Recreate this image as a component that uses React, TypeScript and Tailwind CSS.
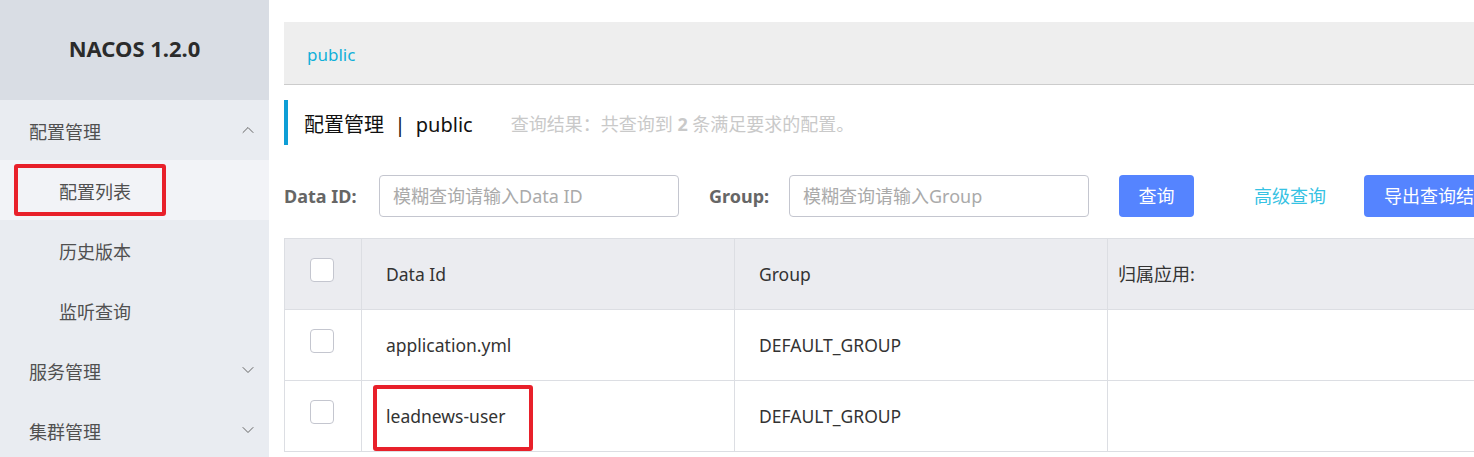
import { ChevronDown, ChevronUp } from "lucide-react";

const font = "font-['Noto_Sans','Noto_Sans_CJK_SC',sans-serif]";

const SideItem = ({ label, sub, open, active }: { label: string; sub?: boolean; open?: boolean; active?: boolean }) => (
  <div
    className={`relative flex h-[60px] items-center pt-1 text-[18px] text-[#505050] ${sub ? "pl-[59px]" : "pl-[29px]"} ${
      active ? "bg-[#f2f3f7]" : ""
    }`}
  >
    {label}
    {open !== undefined && (
      <span className="absolute right-[11px] top-[20px] text-[#666]">
        {open ? <ChevronUp size={20} strokeWidth={1.2} /> : <ChevronDown size={20} strokeWidth={1.2} />}
      </span>
    )}
  </div>
);

const Checkbox = () => <div className="h-6 w-6 rounded-[4px] border border-[#c4c6cf] bg-white" />;

const rows = ["application.yml", "leadnews-user"];

const App = () => {
  return (
    <div className={`relative flex h-[457px] w-[1474px] overflow-hidden bg-white ${font}`}>
      <aside className="w-[269px] shrink-0 bg-[#e9ecf1]">
        <div className="flex h-[100px] items-center justify-center bg-[#d9dde4] pb-1 text-[22px] font-bold text-[#2b2b2b]">
          NACOS 1.2.0
        </div>
        <SideItem label="配置管理" open />
        <SideItem label="配置列表" sub active />
        <SideItem label="历史版本" sub />
        <SideItem label="监听查询" sub />
        <SideItem label="服务管理" open={false} />
        <SideItem label="集群管理" open={false} />
      </aside>

      <main className="w-[1400px] shrink-0 pl-[15px] pt-[22px]">
        <div className="flex h-[63px] items-center border-b border-[#cccccc] bg-[#eeeeee] pl-[23px] pt-1 text-[17px] text-[#11b0d9]">
          public
        </div>

        <div className="mt-[15px] flex h-[45px] items-center border-l-4 border-[#0e9ed6] pl-4 pt-1">
          <span className="text-[20px] text-[#111]">配置管理&nbsp;&nbsp;|&nbsp;&nbsp;public</span>
          <span className="ml-[38px] text-[18px] text-[#c9c9c9]">
            查询结果：共查询到 <b className="font-bold">2</b> 条满足要求的配置。
          </span>
        </div>

        <div className="mt-[30px] flex h-[42px] items-center text-[18px]">
          <span className="w-[95px] font-bold text-[#666]">Data ID:</span>
          <div className="flex h-[42px] w-[300px] items-center rounded-[4px] border border-[#c4c6cf] px-[13px] text-[#aaa]">
            模糊查询请输入Data ID
          </div>
          <span className="ml-[30px] w-[80px] font-bold text-[#666]">Group:</span>
          <div className="flex h-[42px] w-[300px] items-center rounded-[4px] border border-[#c4c6cf] px-[13px] text-[#aaa]">
            模糊查询请输入Group
          </div>
          <button className="ml-[30px] flex h-[42px] w-[75px] items-center justify-center rounded-[4px] bg-[#5584ff] text-white">
            查询
          </button>
          <button className="ml-[60px] h-[42px] px-0 text-[#36c2e3]">高级查询</button>
          <button className="ml-[38px] flex h-[42px] items-center whitespace-nowrap rounded-[4px] bg-[#5584ff] px-5 text-white">
            导出查询结果
          </button>
        </div>

        <table className="mt-[21px] w-[1300px] border-collapse border border-[#dcdee3] text-[17.5px] text-[#333]">
          <thead>
            <tr className="h-[71px] bg-[#ebecf0] text-left">
              <th className="w-[77px] border border-[#dcdee3] pb-2 pl-[25px] font-normal">
                <Checkbox />
              </th>
              <th className="w-[373px] border border-[#dcdee3] pl-6 font-normal">Data Id</th>
              <th className="w-[373px] border border-[#dcdee3] pl-6 font-normal">Group</th>
              <th className="border border-[#dcdee3] pl-[10px] text-[18px] font-normal">归属应用:</th>
            </tr>
          </thead>
          <tbody>
            {rows.map((r) => (
              <tr key={r} className="h-[71px]">
                <td className="border border-[#dcdee3] pb-2 pl-[25px]">
                  <Checkbox />
                </td>
                <td className="border border-[#dcdee3] pl-6">{r}</td>
                <td className="border border-[#dcdee3] pl-6">DEFAULT_GROUP</td>
                <td className="border border-[#dcdee3]"></td>
              </tr>
            ))}
          </tbody>
        </table>
      </main>

      <div className="absolute left-[14px] top-[164px] h-[52px] w-[152px] rounded-[3px] border-4 border-[#e8202a]" />
      <div className="absolute left-[373px] top-[385px] h-[66px] w-[160px] rounded-[3px] border-4 border-[#e8202a]" />
    </div>
  );
};

export default App;
